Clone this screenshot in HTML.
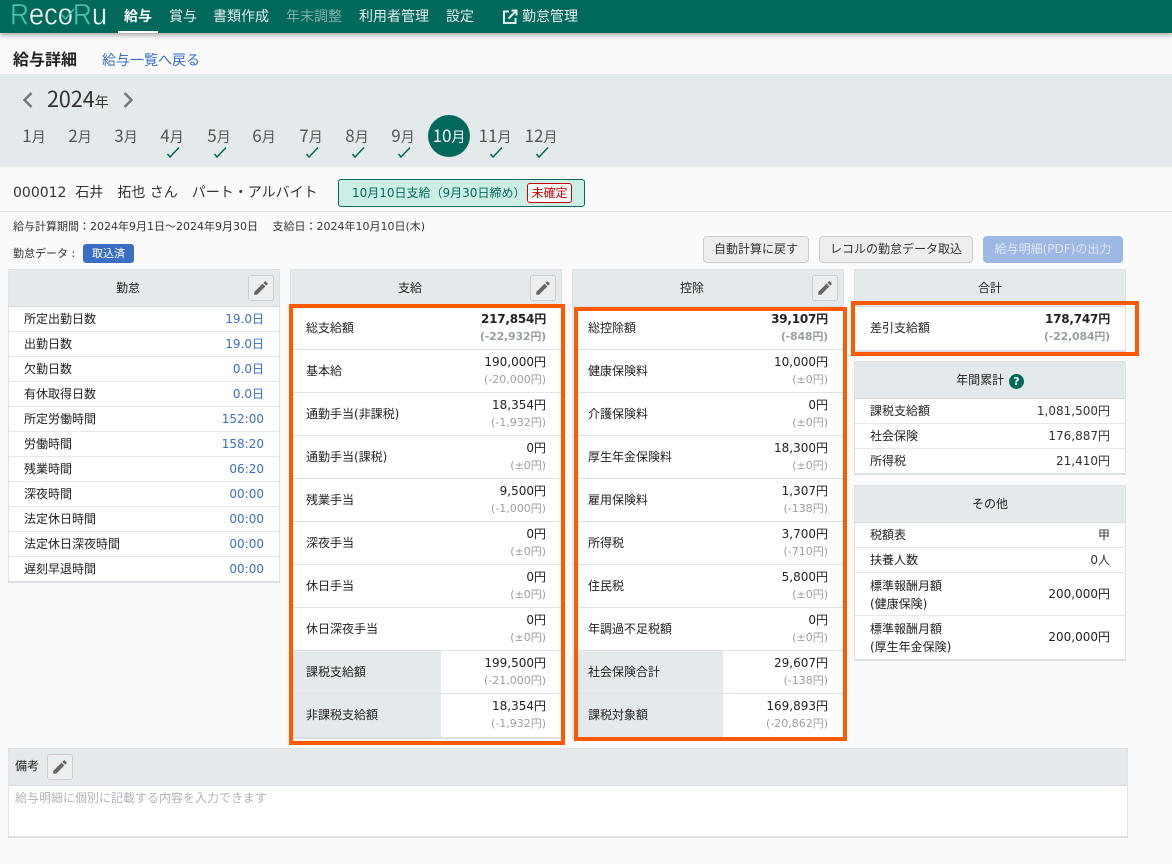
<!DOCTYPE html>
<html lang="ja"><head><meta charset="utf-8"><title>給与詳細</title>
<style>
*{box-sizing:border-box}
html,body{margin:0;padding:0}
body{width:1172px;height:864px;overflow:hidden;position:relative;background:#fafafa;color:#222;font:12px/1.4 "DejaVu Sans","Noto Sans CJK JP",sans-serif}
.a{position:absolute;white-space:nowrap}
.hd{left:0;top:0;width:1172px;height:33px;background:#00695c;box-shadow:0 2px 5px rgba(0,0,0,.35)}
.nav{top:7px;font-size:14px;line-height:20px;color:#e4eeec}
.band{left:0;top:74px;width:1172px;height:93px;background:#e4e9ec}
.m{top:124px;width:46px;text-align:center;font-family:"Noto Sans CJK JP",sans-serif;font-size:17px;line-height:22px;color:#555}
.m small{font-size:14px}
.ck{position:absolute;top:146px;width:14px;height:12px}
.btn{top:236px;height:27px;border:1px solid #ccc;border-radius:4px;background:#eee;text-align:center;font-size:12px;line-height:25px;color:#333}
.col{position:absolute;width:272px;border:1px solid #e0e2e4;border-bottom:2px solid #dcdfe1;background:#fff}
.ch{height:38px;background:#e4e9ec;border-bottom:1px solid #d8dcdf;text-align:center;line-height:37px;font-size:12px;margin:-1px -1px 0;position:relative;border-top:1px solid #dfe2e4;border-left:1px solid #dfe2e4;border-right:1px solid #dfe2e4}
.ch.p{padding-right:32px}
.pen{position:absolute;width:26px;height:26px;border:1px solid #ccc;border-radius:3px;background:#eee}
.pen svg{position:absolute;left:3px;top:3px;width:18px;height:18px;fill:#666}
.s{height:25px;border-bottom:1px solid #e8e8e8;padding:0 15px;display:flex;justify-content:space-between;line-height:25px;font-size:12px}
.s:last-child{border-bottom:0;height:24px}
.s b{font-weight:400;color:#3a6fc4}
.s i{font-style:normal;color:#333}
.t{height:43px;border-bottom:1px solid #e2e2e2;display:flex;justify-content:space-between;font-size:12px;position:relative}
.t:last-child{border-bottom:0}
.t .l{padding-left:15px;line-height:43px;width:150px;white-space:nowrap}
.t .v{padding-right:15px;text-align:right;line-height:20px;padding-top:2px}
.t .v span{display:block;font-size:11px;line-height:16px;color:#9a9fa3}
.t.g{background:linear-gradient(90deg,#e4e9ec 150px,#fff 150px)}
.t.tot .v{font-weight:700;letter-spacing:-.2px}
.t.tot .v span{font-weight:700}
.d{height:43px;border-bottom:1px solid #e8e8e8;padding:1px 15px 0;display:flex;justify-content:space-between;font-size:12px;align-items:center;line-height:18px}
.d:last-child{border-bottom:0}
.d i{font-style:normal;position:relative;top:-1px}
.or{position:absolute;border:4px solid #ff5a00}
</style></head><body>

<div class="a hd"></div>
<svg class="a" style="left:0;top:0" width="112" height="32"><text x="10" y="24.500" font-family="Liberation Sans" textLength="97" lengthAdjust="spacingAndGlyphs" stroke="#00695c" stroke-width=".45"><tspan fill="#4cc0a8" font-size="30">R</tspan><tspan fill="#f2f8f6" font-size="31">eco</tspan><tspan fill="#4cc0a8" font-size="30">R</tspan><tspan fill="#f2f8f6" font-size="31">u</tspan></text><path d="M62 15l3.500 4L74 9" fill="none" stroke="#4cc0a8" stroke-width="1.500"/></svg>
<div class="a" style="left:118px;top:31px;width:40px;height:2px;background:#fff"></div>
<div class="a nav" style="left:124px;color:#fff;font-weight:700">給与</div>
<div class="a nav" style="left:169px">賞与</div>
<div class="a nav" style="left:213px">書類作成</div>
<div class="a nav" style="left:286px;color:#7fb0a8">年末調整</div>
<div class="a nav" style="left:359px">利用者管理</div>
<div class="a nav" style="left:446px">設定</div>
<svg class="a" style="left:502px;top:9px" width="16" height="16" viewBox="0 0 16 16" fill="none" stroke="#e4eeec" stroke-width="2"><path d="M7 2.500H2V14h11.500V9M6.500 9.500 14 2M9.500 1.500H14.500V6.500"/></svg>
<div class="a nav" style="left:522px">勤怠管理</div>

<div class="a" style="left:13px;top:50px;font-size:16px;font-weight:700;line-height:20px">給与詳細</div>
<div class="a" style="left:102px;top:51px;font-size:14px;line-height:20px;color:#3a6fc4">給与一覧へ戻る</div>

<div class="a band"></div>
<svg class="a" style="left:21px;top:91px" width="14" height="18" fill="none" stroke="#777" stroke-width="2.500"><path d="M10.500 2 3.500 9l7 7"/></svg>
<svg class="a" style="left:121px;top:91px" width="14" height="18" fill="none" stroke="#777" stroke-width="2.500"><path d="M3.500 2l7 7-7 7"/></svg>
<div class="a" style="left:47px;top:84px;font-family:'Noto Sans CJK JP',sans-serif;font-size:21.500px;line-height:30px;color:#333">2024<span style="font-size:14px">年</span></div>

<div class="a m" style="left:11px">1<small>月</small></div>
<div class="a m" style="left:57px">2<small>月</small></div>
<div class="a m" style="left:103px">3<small>月</small></div>
<div class="a m" style="left:149px">4<small>月</small></div>
<div class="a m" style="left:196px">5<small>月</small></div>
<div class="a m" style="left:241px">6<small>月</small></div>
<div class="a m" style="left:288px">7<small>月</small></div>
<div class="a m" style="left:334px">8<small>月</small></div>
<div class="a m" style="left:380px">9<small>月</small></div>
<div class="a" style="left:428px;top:115px;width:42px;height:42px;border-radius:50%;background:#00695c"></div>
<div class="a m" style="left:426px;color:#fff">10<small>月</small></div>
<div class="a m" style="left:472px">11<small>月</small></div>
<div class="a m" style="left:518px">12<small>月</small></div>
<svg class="ck" style="left:166px" viewBox="0 0 14 12" fill="none" stroke="#00695c" stroke-width="1.500"><path d="M1.500 8l2.500 3L13 1.500"/></svg>
<svg class="ck" style="left:213px" viewBox="0 0 14 12" fill="none" stroke="#00695c" stroke-width="1.500"><path d="M1.500 8l2.500 3L13 1.500"/></svg>
<svg class="ck" style="left:305px" viewBox="0 0 14 12" fill="none" stroke="#00695c" stroke-width="1.500"><path d="M1.500 8l2.500 3L13 1.500"/></svg>
<svg class="ck" style="left:351px" viewBox="0 0 14 12" fill="none" stroke="#00695c" stroke-width="1.500"><path d="M1.500 8l2.500 3L13 1.500"/></svg>
<svg class="ck" style="left:397px" viewBox="0 0 14 12" fill="none" stroke="#00695c" stroke-width="1.500"><path d="M1.500 8l2.500 3L13 1.500"/></svg>
<svg class="ck" style="left:489px" viewBox="0 0 14 12" fill="none" stroke="#00695c" stroke-width="1.500"><path d="M1.500 8l2.500 3L13 1.500"/></svg>
<svg class="ck" style="left:535px" viewBox="0 0 14 12" fill="none" stroke="#00695c" stroke-width="1.500"><path d="M1.500 8l2.500 3L13 1.500"/></svg>

<div class="a" style="left:13px;top:183px;font-size:14px;line-height:20px;color:#333">000012&nbsp;&nbsp;石井　拓也 さん　パート・アルバイト</div>
<div class="a" style="left:338px;top:179px;width:247px;height:28px;background:#cdeee4;border:1px solid #00695c;border-radius:3px"></div>
<div class="a" style="left:352px;top:184px;font-size:12px;line-height:18px;color:#00695c">10月10日支給（9月30日締め）</div>
<div class="a" style="left:527px;top:183px;width:45px;height:20px;background:#fff;border:1px solid #c00;border-radius:3px;text-align:center;font-size:12px;line-height:18px;color:#c00">未確定</div>
<div class="a" style="left:0;top:211px;width:1172px;height:1px;background:#e2e2e2"></div>

<div class="a" style="left:13px;top:219px;font-size:11px;line-height:16px;color:#333">給与計算期間：2024年9月1日～2024年9月30日　 支給日：2024年10月10日(木)</div>
<div class="a" style="left:13px;top:246px;font-size:11px;line-height:16px;color:#333">勤怠データ :</div>
<div class="a" style="left:83px;top:244px;width:51px;height:19px;background:#3a6fc4;border-radius:3px;color:#fff;text-align:center;font-size:11px;line-height:19px">取込済</div>

<div class="a btn" style="left:703px;width:106px">自動計算に戻す</div>
<div class="a btn" style="left:819px;width:154px">レコルの勤怠データ取込</div>
<div class="a btn" style="left:983px;width:140px;background:#9db8e2;border-color:#9db8e2;color:#dfe8f6;white-space:nowrap">給与明細(PDF)の出力</div>

<!-- 勤怠 -->
<div class="col" style="left:8px;top:269px">
<div class="ch p">勤怠</div>
<div class="s"><span>所定出勤日数</span><b>19.0日</b></div>
<div class="s"><span>出勤日数</span><b>19.0日</b></div>
<div class="s"><span>欠勤日数</span><b>0.0日</b></div>
<div class="s"><span>有休取得日数</span><b>0.0日</b></div>
<div class="s"><span>所定労働時間</span><b>152:00</b></div>
<div class="s"><span>労働時間</span><b>158:20</b></div>
<div class="s"><span>残業時間</span><b>06:20</b></div>
<div class="s"><span>深夜時間</span><b>00:00</b></div>
<div class="s"><span>法定休日時間</span><b>00:00</b></div>
<div class="s"><span>法定休日深夜時間</span><b>00:00</b></div>
<div class="s"><span>遅刻早退時間</span><b>00:00</b></div>
</div>
<div class="pen" style="left:248px;top:275px"><svg viewBox="0 0 24 24"><path d="M3 17.250V21h3.750L17.810 9.940l-3.750-3.750L3 17.250zM20.710 7.040c.39-.39.39-1.020 0-1.410l-2.340-2.340c-.39-.39-1.020-.39-1.410 0l-1.830 1.830 3.750 3.750 1.830-1.830z"/></svg></div>

<!-- 支給 -->
<div class="col" style="left:290px;top:269px">
<div class="ch p">支給</div>
<div class="t tot"><div class="l">総支給額</div><div class="v">217,854円<span>(-22,932円)</span></div></div>
<div class="t"><div class="l">基本給</div><div class="v">190,000円<span>(-20,000円)</span></div></div>
<div class="t"><div class="l">通勤手当(非課税)</div><div class="v">18,354円<span>(-1,932円)</span></div></div>
<div class="t"><div class="l">通勤手当(課税)</div><div class="v">0円<span>(±0円)</span></div></div>
<div class="t"><div class="l">残業手当</div><div class="v">9,500円<span>(-1,000円)</span></div></div>
<div class="t"><div class="l">深夜手当</div><div class="v">0円<span>(±0円)</span></div></div>
<div class="t"><div class="l">休日手当</div><div class="v">0円<span>(±0円)</span></div></div>
<div class="t"><div class="l">休日深夜手当</div><div class="v">0円<span>(±0円)</span></div></div>
<div class="t g"><div class="l">課税支給額</div><div class="v">199,500円<span>(-21,000円)</span></div></div>
<div class="t g"><div class="l">非課税支給額</div><div class="v">18,354円<span>(-1,932円)</span></div></div>
</div>
<div class="pen" style="left:530px;top:275px"><svg viewBox="0 0 24 24"><path d="M3 17.250V21h3.750L17.810 9.940l-3.750-3.750L3 17.250zM20.710 7.040c.39-.39.39-1.020 0-1.410l-2.340-2.340c-.39-.39-1.020-.39-1.410 0l-1.830 1.830 3.750 3.750 1.830-1.830z"/></svg></div>

<!-- 控除 -->
<div class="col" style="left:572px;top:269px">
<div class="ch p">控除</div>
<div class="t tot"><div class="l">総控除額</div><div class="v">39,107円<span>(-848円)</span></div></div>
<div class="t"><div class="l">健康保険料</div><div class="v">10,000円<span>(±0円)</span></div></div>
<div class="t"><div class="l">介護保険料</div><div class="v">0円<span>(±0円)</span></div></div>
<div class="t"><div class="l">厚生年金保険料</div><div class="v">18,300円<span>(±0円)</span></div></div>
<div class="t"><div class="l">雇用保険料</div><div class="v">1,307円<span>(-138円)</span></div></div>
<div class="t"><div class="l">所得税</div><div class="v">3,700円<span>(-710円)</span></div></div>
<div class="t"><div class="l">住民税</div><div class="v">5,800円<span>(±0円)</span></div></div>
<div class="t"><div class="l">年調過不足税額</div><div class="v">0円<span>(±0円)</span></div></div>
<div class="t g"><div class="l">社会保険合計</div><div class="v">29,607円<span>(-138円)</span></div></div>
<div class="t g"><div class="l">課税対象額</div><div class="v">169,893円<span>(-20,862円)</span></div></div>
</div>
<div class="pen" style="left:812px;top:275px"><svg viewBox="0 0 24 24"><path d="M3 17.250V21h3.750L17.810 9.940l-3.750-3.750L3 17.250zM20.710 7.040c.39-.39.39-1.020 0-1.410l-2.340-2.340c-.39-.39-1.020-.39-1.410 0l-1.830 1.830 3.750 3.750 1.830-1.830z"/></svg></div>

<!-- 合計 -->
<div class="col" style="left:854px;top:269px">
<div class="ch">合計</div>
<div class="t tot"><div class="l">差引支給額</div><div class="v">178,747円<span>(-22,084円)</span></div></div>
</div>

<!-- 年間累計 -->
<div class="col" style="left:854px;top:361px">
<div class="ch" style="line-height:37px;height:38px">年間累計 <span style="display:inline-block;width:15px;height:15px;border-radius:50%;background:#00695c;color:#fff;font-size:11px;line-height:15px;font-weight:700;margin-left:1px;vertical-align:-1px">?</span></div>
<div class="s"><span>課税支給額</span><i>1,081,500円</i></div>
<div class="s"><span>社会保険</span><i>176,887円</i></div>
<div class="s"><span>所得税</span><i>21,410円</i></div>
</div>

<!-- その他 -->
<div class="col" style="left:854px;top:485px">
<div class="ch">その他</div>
<div class="s"><span>税額表</span><i>甲</i></div>
<div class="s"><span>扶養人数</span><i>0人</i></div>
<div class="d"><span>標準報酬月額<br>(健康保険)</span><i>200,000円</i></div>
<div class="d"><span>標準報酬月額<br>(厚生年金保険)</span><i>200,000円</i></div>
</div>

<!-- 備考 -->
<div class="col" style="left:8px;top:748px;width:1120px;height:90px">
<div class="ch" style="text-align:left;padding-left:6px;color:#222;line-height:35px">備考</div>
<div style="padding:2px 6px;font-size:12px;line-height:20px;color:#b0b4b7">給与明細に個別に記載する内容を入力できます</div>
</div>
<div class="pen" style="left:47px;top:754px"><svg viewBox="0 0 24 24"><path d="M3 17.250V21h3.750L17.810 9.940l-3.750-3.750L3 17.250zM20.710 7.040c.39-.39.39-1.020 0-1.410l-2.340-2.340c-.39-.39-1.020-.39-1.410 0l-1.830 1.830 3.750 3.750 1.830-1.830z"/></svg></div>

<!-- highlight boxes -->
<div class="or" style="left:289px;top:304px;width:276px;height:441px"></div>
<div class="or" style="left:574px;top:307px;width:273px;height:434px"></div>
<div class="or" style="left:851px;top:301px;width:288px;height:55px"></div>

</body></html>
